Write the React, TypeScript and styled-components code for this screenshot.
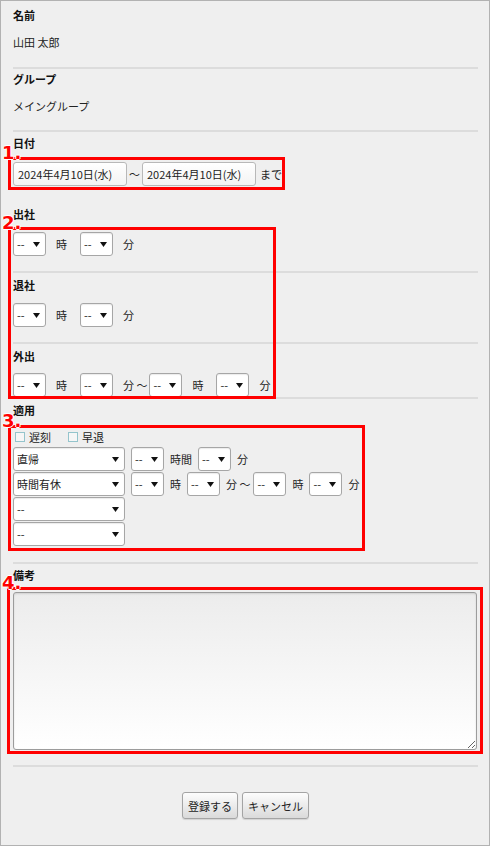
import React from "react";
import styled, { createGlobalStyle } from "styled-components";

const GlobalStyle = createGlobalStyle`
  html, body {
    margin: 0;
    padding: 0;
    background: #efefef;
  }
  body {
    font-family: "Noto Sans CJK JP", "Noto Sans", sans-serif;
    font-size: 11px;
    color: #222;
  }
`;

const Arrow: React.FC = () => (
  <svg width="7" height="5" viewBox="0 0 7 5">
    <path d="M0 0 H7 L3.5 5 Z" fill="#111" />
  </svg>
);

const Select: React.FC<{ value?: string; width?: number }> = ({
  value = "--",
  width = 33,
}) => (
  <SelectBox $w={width}>
    <span>{value}</span>
    <Arrow />
  </SelectBox>
);

const Highlight: React.FC<{
  n: number;
  l: number;
  t: number;
  w: number;
  b: number;
  mt?: number;
  children: React.ReactNode;
}> = ({ n, l, t, w, b, mt = 0, children }) => (
  <Mark $mt={mt}>
    {children}
    <MarkFrame $l={l} $t={t} $w={w} $b={b} />
    <MarkNum>{n}.</MarkNum>
  </Mark>
);

const App: React.FC = () => {
  return (
    <>
      <GlobalStyle />
      <Frame>
        <Section $pt={6} $pb={17} $line>
          <Label>名前</Label>
          <Value>山田 太郎</Value>
        </Section>

        <Section $pt={2} $pb={16} $line>
          <Label>グループ</Label>
          <Value>メイングループ</Value>
        </Section>

        <Section $pt={3} $pb={19}>
          <Label>日付</Label>
          <Highlight n={1} l={-5} t={-5} w={277} b={-4} mt={11}>
            <Row>
              <DateInput readOnly value="2024年4月10日(水)" />
              <Tilde>～</Tilde>
              <DateInput readOnly value="2024年4月10日(水)" />
              <Unit $ml={4}>まで</Unit>
            </Row>
          </Highlight>
        </Section>

        <Section $pt={1} $pb={0} $line>
          <Label>出社</Label>
          <Highlight n={2} l={-5} t={-5} w={268} b={-2} mt={10}>
            <Row>
              <Select />
              <Unit>時</Unit>
              <Select />
              <Unit $mr={0}>分</Unit>
            </Row>
            <Divider $mt={15} />
            <Label $mt={4}>退社</Label>
            <Row $mt={10}>
              <Select />
              <Unit>時</Unit>
              <Select />
              <Unit $mr={0}>分</Unit>
            </Row>
            <Divider $mt={15} />
            <Label $mt={4}>外出</Label>
            <Row $mt={9}>
              <Select />
              <Unit>時</Unit>
              <Select />
              <Unit $mr={2}>分 ～</Unit>
              <Select />
              <Unit>時</Unit>
              <Select />
              <Unit $mr={0}>分</Unit>
            </Row>
          </Highlight>
        </Section>

        <Section $pt={3} $pb={16} $line>
          <Label>適用</Label>
          <Highlight n={3} l={-5} t={-5} w={357} b={-5} mt={12}>
            <CheckRow>
              <Check>
                <Box />
                遅刻
              </Check>
              <Check>
                <Box />
                早退
              </Check>
            </CheckRow>
            <Stack>
              <Row>
                <Select value="直帰" width={112} />
                <Select />
                <Unit $ml={6} $mr={6}>
                  時間
                </Unit>
                <Select />
                <Unit $ml={6} $mr={0}>
                  分
                </Unit>
              </Row>
              <Row>
                <Select value="時間有休" width={112} />
                <Select />
                <Unit $ml={6} $mr={6}>
                  時
                </Unit>
                <Select />
                <Unit $ml={6} $mr={3}>
                  分 ～
                </Unit>
                <Select />
                <Unit $ml={6} $mr={6}>
                  時
                </Unit>
                <Select />
                <Unit $ml={6} $mr={0}>
                  分
                </Unit>
              </Row>
              <Row>
                <Select width={112} />
              </Row>
              <Row>
                <Select width={112} />
              </Row>
            </Stack>
          </Highlight>
        </Section>

        <Section $pt={3} $pb={15} $line>
          <Label>備考</Label>
          <Highlight n={4} l={-6} t={-5} w={476} b={-4} mt={9}>
            <Memo />
          </Highlight>
        </Section>

        <Buttons>
          <Button>登録する</Button>
          <Button>キャンセル</Button>
        </Buttons>
      </Frame>
    </>
  );
};

const Frame = styled.div`
  width: 490px;
  height: 846px;
  box-sizing: border-box;
  border: 1px solid #b2b2b2;
  background: #efefef;
  padding: 0 11px 0 12px;
  overflow: hidden;
`;

const Section = styled.div<{ $pt: number; $pb: number; $line?: boolean }>`
  padding-top: ${(p) => p.$pt}px;
  padding-bottom: ${(p) => p.$pb}px;
  border-bottom: ${(p) => (p.$line ? "2px solid #dcdcdc" : "none")};
`;

const Label = styled.div<{ $mt?: number }>`
  margin-top: ${(p) => p.$mt || 0}px;
  height: 16px;
  line-height: 16px;
  font-weight: bold;
  color: #111;
`;

const Value = styled.div`
  margin-top: 11px;
  height: 16px;
  line-height: 16px;
`;

const Divider = styled.div<{ $mt: number }>`
  margin-top: ${(p) => p.$mt}px;
  height: 2px;
  background: #dcdcdc;
`;

const Row = styled.div<{ $mt?: number }>`
  display: flex;
  align-items: center;
  margin-top: ${(p) => p.$mt || 0}px;
  white-space: nowrap;
`;

const Stack = styled.div`
  display: flex;
  flex-direction: column;
  gap: 1px;
  margin-top: 3px;

  ${Row} > div + div {
    margin-left: 6px;
  }
`;

const Unit = styled.span<{ $ml?: number; $mr?: number }>`
  margin-left: ${(p) => p.$ml ?? 10}px;
  margin-right: ${(p) => p.$mr ?? 13}px;
  line-height: 16px;
`;

const Tilde = styled.span`
  margin: 0 2px;
  line-height: 16px;
`;

const SelectBox = styled.div<{ $w: number }>`
  width: ${(p) => p.$w}px;
  height: 24px;
  box-sizing: border-box;
  border: 1px solid #a6a6a6;
  border-radius: 3px;
  background: #fff;
  box-shadow: inset 0 1px 1px rgba(0, 0, 0, 0.08);
  padding: 0 5px 0 3px;
  display: flex;
  align-items: center;
  justify-content: space-between;
  flex-shrink: 0;
  color: #222;
`;

const DateInput = styled.input`
  width: 114px;
  height: 24px;
  box-sizing: border-box;
  margin: 0;
  border: 1px solid #b8b8b8;
  border-radius: 3px;
  background: linear-gradient(#ffffff, #f3f3f3);
  padding: 0 0 0 4px;
  font: 11px "Noto Sans CJK JP", "Noto Sans", sans-serif;
  color: #222;
  outline: none;
`;

const CheckRow = styled.div`
  display: flex;
  align-items: center;
  height: 14px;
  padding-left: 2px;
  gap: 17px;
`;

const Check = styled.label`
  display: flex;
  align-items: center;
  gap: 4px;
  line-height: 14px;
`;

const Box = styled.span`
  width: 10px;
  height: 10px;
  box-sizing: border-box;
  border: 1px solid #94c4cc;
  background: #f6f6f6;
`;

const Memo = styled.textarea`
  display: block;
  width: 464px;
  height: 158px;
  margin: 0;
  box-sizing: border-box;
  border: 1px solid #9c9c9c;
  border-radius: 3px;
  background: linear-gradient(#ececec, #ffffff);
  box-shadow: inset 0 1px 2px rgba(0, 0, 0, 0.12);
  outline: none;
`;

const Buttons = styled.div`
  display: flex;
  justify-content: center;
  gap: 4px;
  margin-top: 25px;
`;

const Button = styled.button`
  height: 27px;
  padding: 0 5px;
  border: 1px solid #a4a4a4;
  border-radius: 3px;
  background: linear-gradient(#fdfdfd, #dadada);
  box-shadow: 0 1px 1px rgba(0, 0, 0, 0.12);
  font: 11px "Noto Sans CJK JP", "Noto Sans", sans-serif;
  color: #222;
`;

const Mark = styled.div<{ $mt: number }>`
  position: relative;
  margin-top: ${(p) => p.$mt}px;
`;

const MarkFrame = styled.div<{ $l: number; $t: number; $w: number; $b: number }>`
  position: absolute;
  left: ${(p) => p.$l}px;
  top: ${(p) => p.$t}px;
  bottom: ${(p) => p.$b}px;
  width: ${(p) => p.$w}px;
  box-sizing: border-box;
  border: 3px solid #ff0000;
  pointer-events: none;
`;

const MarkNum = styled.span`
  position: absolute;
  left: -11px;
  top: -18px;
  font: bold 18px/1 "DejaVu Sans", sans-serif;
  color: #ff0000;
  text-shadow: 1px 0 0 #fff, -1px 0 0 #fff, 0 1px 0 #fff, 0 -1px 0 #fff;
`;

export default App;
